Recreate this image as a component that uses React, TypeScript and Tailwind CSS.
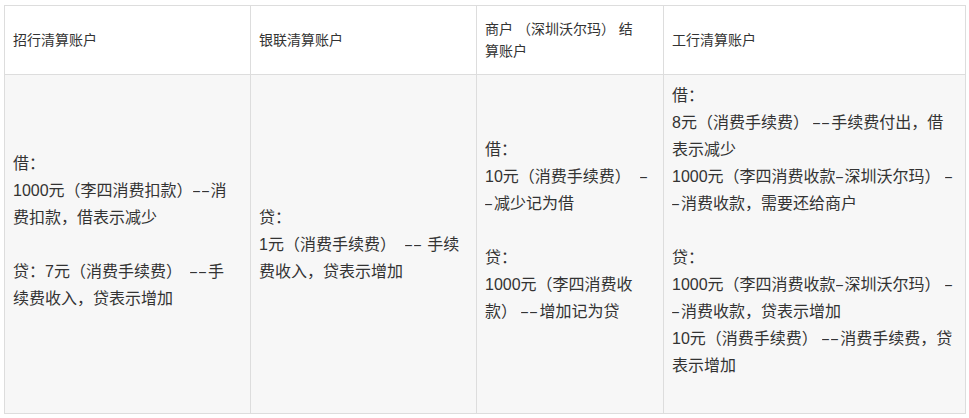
import React from "react";

const headers: { w: string; lines: string[] }[] = [
  { w: "w-[246px]", lines: ["招行清算账户"] },
  { w: "w-[226px]", lines: ["银联清算账户"] },
  { w: "w-[187px]", lines: ["商户 （深圳沃尔玛） 结", "算账户"] },
  { w: "w-[302px]", lines: ["工行清算账户"] },
];

const body: string[][] = [
  [
    "借：",
    "1000元（李四消费扣款）––消",
    "费扣款，借表示减少",
    "",
    "贷：7元（消费手续费）\u3000––手",
    "续费收入，贷表示增加",
    "",
  ],
  ["贷：", "1元（消费手续费）  –– 手续", "费收入，贷表示增加"],
  [
    "借：",
    "10元（消费手续费）  –",
    "–减少记为借",
    "",
    "贷：",
    "1000元（李四消费收",
    "款） ––增加记为贷",
    "",
  ],
  [
    "借：",
    "8元（消费手续费） ––手续费付出，借",
    "表示减少",
    "1000元（李四消费收款–深圳沃尔玛） –",
    "–消费收款，需要还给商户",
    "",
    "贷：",
    "1000元（李四消费收款–深圳沃尔玛） –",
    "–消费收款，贷表示增加",
    "10元（消费手续费） ––消费手续费，贷",
    "表示增加",
    "",
  ],
];

function Line({ text }: { text: string }) {
  const parts = text.split(/(–)/);
  return (
    <div className="whitespace-pre h-[27px]">
      {parts.map((p, i) =>
        p === "–" ? (
          <span key={i} className="inline-block w-[9px] overflow-hidden align-top">
            <span className="inline-block scale-x-[0.78] origin-left">–</span>
          </span>
        ) : (
          <React.Fragment key={i}>{p}</React.Fragment>
        )
      )}
    </div>
  );
}

export default function App() {
  return (
    <div
      className="w-[969px] h-[418px] bg-white pl-[4px] pt-[5px] text-[#333333]"
      style={{ fontFamily: '"Liberation Sans", "Noto Sans CJK SC", sans-serif' }}
    >
      <table className="border-collapse table-fixed w-[961px]">
        <thead>
          <tr>
            {headers.map((h, i) => (
              <th
                key={i}
                className={`${h.w} border border-[#dddddd] bg-white px-2 py-[12px] text-left align-middle text-[14px] font-normal leading-[22px]`}
              >
                {h.lines.map((l, j) => (
                  <div key={j} className="whitespace-pre">
                    {l}
                  </div>
                ))}
              </th>
            ))}
          </tr>
        </thead>
        <tbody>
          <tr>
            {body.map((lines, i) => (
              <td
                key={i}
                className="border border-[#dddddd] bg-[#f7f7f7] px-2 pt-[7px] pb-[7px] align-middle text-[16px] leading-[27px]"
              >
                {lines.map((l, j) => (
                  <Line key={j} text={l} />
                ))}
              </td>
            ))}
          </tr>
        </tbody>
      </table>
    </div>
  );
}
